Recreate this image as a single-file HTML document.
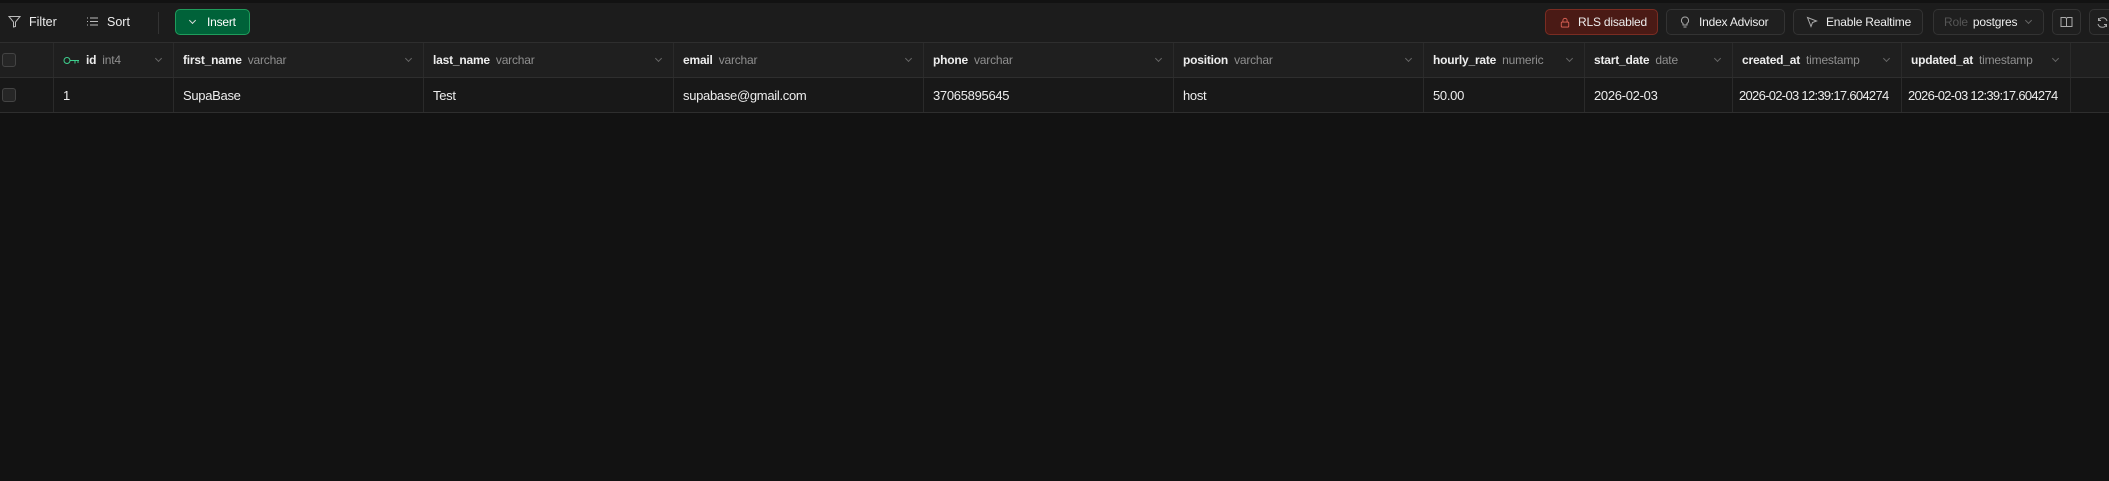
<!DOCTYPE html>
<html><head><style>
*{box-sizing:border-box;margin:0;padding:0}
body{width:2109px;height:481px;background:#121212;font-family:"Liberation Sans",sans-serif;color:#ededed;overflow:hidden;position:relative}
.top{position:absolute;left:0;top:0;width:2109px;height:43px;background:#1c1c1c;border-top:3px solid #121212;border-bottom:1px solid #2e2e2e}
.btn{position:absolute;top:9px;height:26px;border:1px solid #333;border-radius:5px;font-size:12px;letter-spacing:-0.2px;white-space:nowrap;display:flex;align-items:center;gap:8px;padding:0 10px;color:#ededed;background:#1f1f1f}
.t{position:absolute;top:0;display:flex;align-items:center;gap:8px;font-size:12.5px;height:43px}
.hdr{position:absolute;left:0;top:43px;width:2109px;height:35px;background:#1f1f1f;border-bottom:1px solid #2e2e2e}
.row{position:absolute;left:0;top:78px;width:2109px;height:35px;background:#181818;border-bottom:1px solid #2e2e2e}
.c{position:absolute;top:0;height:100%;border-right:1px solid #2a2a2a;display:flex;align-items:center;padding-left:9px;font-size:13px;letter-spacing:-0.3px;white-space:nowrap;overflow:hidden}
.hdr .c{font-size:12px;letter-spacing:-0.2px}
.hdr b{font-weight:bold;margin-right:6px}
.ty{color:#8f8f8f}
.chev{position:absolute;right:12px;top:13px;width:5px;height:5px;border-right:1px solid #666;border-bottom:1px solid #666;transform:rotate(45deg)}
.cb{width:14px;height:14px;border:1px solid #444;border-radius:3px;background:#262626;margin-left:-7px}
</style></head><body>
<div class="top">
 <div class="t" style="left:8px;top:-3px"><svg width="13" height="13" viewBox="0 0 13 13"><path d="M1 1.5h11L7.5 7v4.5L5.5 12V7z" fill="none" stroke="#bbb" stroke-width="1"/></svg>Filter</div>
 <div class="t" style="left:86px;top:-3px"><svg width="13" height="13" viewBox="0 0 13 13" stroke="#bbb"><path d="M4 3h8M4 6.5h8M4 10h8M1 3h1M1 6.5h1M1 10h1"/></svg>Sort</div>
 <div style="position:absolute;left:158px;top:9px;width:1px;height:22px;background:#333"></div>
 <div class="btn" style="left:175px;top:6px;width:75px;background:#006239;border-color:#1f9c5c;color:#fff;gap:12px;padding-left:14px"><span style="display:inline-block;width:5px;height:5px;border-right:1px solid #ddd;border-bottom:1px solid #ddd;transform:rotate(45deg);margin-top:-3px"></span>Insert</div>
 <div class="btn" style="left:1545px;top:6px;width:113px;background:#4a1a15;border-color:#7a2c22;padding-left:14px"><svg width="12" height="13" viewBox="0 0 12 13" fill="none" stroke="#e5675a"><rect x="1.5" y="6" width="9" height="6" rx="1"/><path d="M3.5 6V4a2.5 2.5 0 0 1 5 0v2"/></svg>RLS disabled</div>
 <div class="btn" style="left:1666px;top:6px;width:119px;padding-left:12px"><svg width="12" height="13" viewBox="0 0 12 13" fill="none" stroke="#aaa"><path d="M6 1a3.5 3.5 0 0 0-2 6.4V9h4V7.4A3.5 3.5 0 0 0 6 1zM4.5 11h3"/></svg>Index Advisor</div>
 <div class="btn" style="left:1793px;top:6px;width:130px;padding-left:12px"><svg width="12" height="13" viewBox="0 0 12 13" fill="none" stroke="#aaa"><path d="M1.5 1.5l9 3.5-4 1.5-1.5 4z"/></svg>Enable Realtime</div>
 <div class="btn" style="left:1933px;top:6px;width:111px;gap:5px"><span style="color:#555">Role</span>postgres<span style="display:inline-block;width:5px;height:5px;border-right:1px solid #666;border-bottom:1px solid #666;transform:rotate(45deg);margin:-3px 0 0 4px"></span></div>
 <div class="btn" style="left:2052px;top:6px;width:29px;padding:0 7px"><svg width="13" height="12" viewBox="0 0 13 12" fill="none" stroke="#aaa"><path d="M1 1.5h4.5l1 1 1-1H12v9H1zM6.5 2.5v8"/></svg></div>
 <div class="btn" style="left:2089px;top:6px;width:40px;padding:0 6px"><svg width="13" height="13" viewBox="0 0 13 13" fill="none" stroke="#aaa"><path d="M11 5A4.5 4.5 0 0 0 2.5 4.5M2 8a4.5 4.5 0 0 0 8.5.5M2.5 2v2.5H5M10.5 11V8.5H8"/></svg></div>
</div>
<div class="hdr">
 <div class="c" style="left:0;width:54px"><div class="cb"></div></div>
 <div class="c" style="left:54px;width:120px"><svg width="17" height="9" viewBox="0 0 17 9" fill="none" stroke="#3ecf8e" style="margin-right:6px"><circle cx="4" cy="4.5" r="3"/><path d="M7 4.5h9M12 4.5v3M15 4.5v2.5"/></svg><b>id</b><span class="ty">int4</span><i class="chev"></i></div>
 <div class="c" style="left:174px;width:250px"><b>first_name</b><span class="ty">varchar</span><i class="chev"></i></div>
 <div class="c" style="left:424px;width:250px"><b>last_name</b><span class="ty">varchar</span><i class="chev"></i></div>
 <div class="c" style="left:674px;width:250px"><b>email</b><span class="ty">varchar</span><i class="chev"></i></div>
 <div class="c" style="left:924px;width:250px"><b>phone</b><span class="ty">varchar</span><i class="chev"></i></div>
 <div class="c" style="left:1174px;width:250px"><b>position</b><span class="ty">varchar</span><i class="chev"></i></div>
 <div class="c" style="left:1424px;width:161px"><b>hourly_rate</b><span class="ty">numeric</span><i class="chev"></i></div>
 <div class="c" style="left:1585px;width:148px"><b>start_date</b><span class="ty">date</span><i class="chev"></i></div>
 <div class="c" style="left:1733px;width:169px"><b>created_at</b><span class="ty">timestamp</span><i class="chev"></i></div>
 <div class="c" style="left:1902px;width:169px"><b>updated_at</b><span class="ty">timestamp</span><i class="chev"></i></div>
</div>
<div class="row">
 <div class="c" style="left:0;width:54px"><div class="cb"></div></div>
 <div class="c" style="left:54px;width:120px">1</div>
 <div class="c" style="left:174px;width:250px">SupaBase</div>
 <div class="c" style="left:424px;width:250px">Test</div>
 <div class="c" style="left:674px;width:250px">supabase@gmail.com</div>
 <div class="c" style="left:924px;width:250px">37065895645</div>
 <div class="c" style="left:1174px;width:250px">host</div>
 <div class="c" style="left:1424px;width:161px">50.00</div>
 <div class="c" style="left:1585px;width:148px">2026-02-03</div>
 <div class="c" style="left:1733px;width:169px;padding-left:6px;letter-spacing:-0.7px">2026-02-03 12:39:17.604274</div>
 <div class="c" style="left:1902px;width:169px;padding-left:6px;letter-spacing:-0.7px">2026-02-03 12:39:17.604274</div>
</div>
</body></html>
